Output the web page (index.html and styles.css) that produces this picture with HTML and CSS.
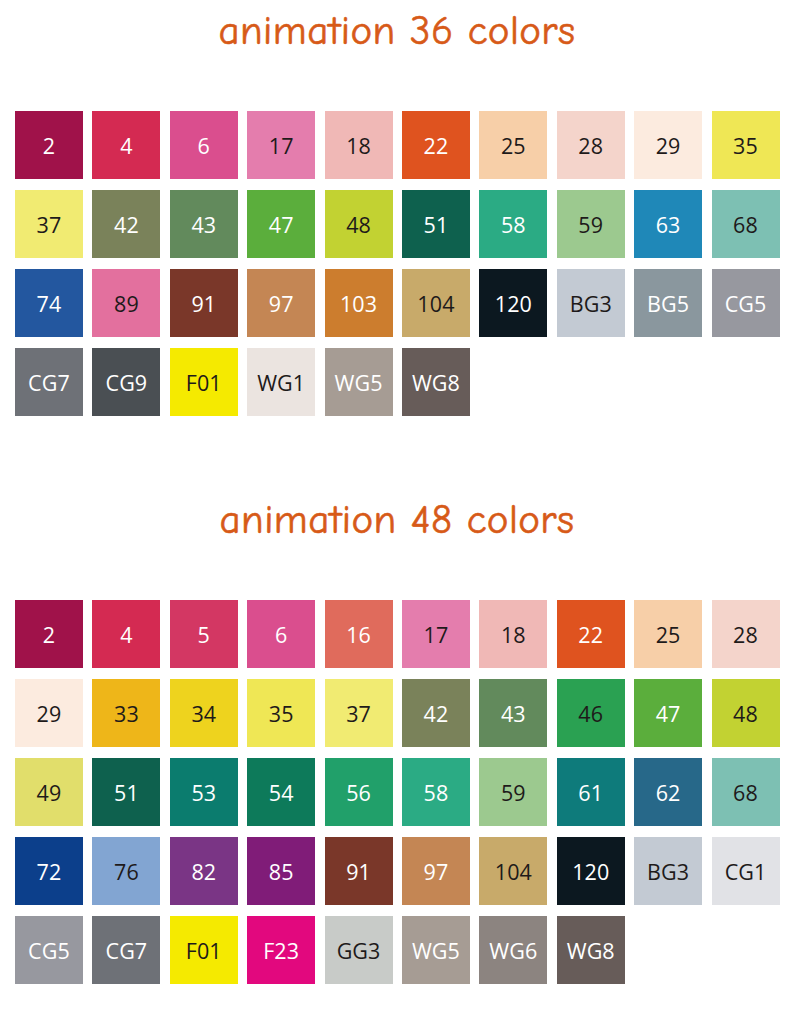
FILE: index.html
```html
<!DOCTYPE html>
<html>
<head>
<meta charset="utf-8">
<link rel="stylesheet" href="styles.css">
</head>
<body>
<section class="set set-36">
  <h1 class="title">animation 36 colors</h1>
  <div class="grid">
    <div class="sw" style="background:#A0124A">2</div>
    <div class="sw" style="background:#D42A52">4</div>
    <div class="sw" style="background:#DA4E8E">6</div>
    <div class="sw d" style="background:#E47DAD">17</div>
    <div class="sw d" style="background:#F0B8B6">18</div>
    <div class="sw" style="background:#DF531F">22</div>
    <div class="sw d" style="background:#F7CFA8">25</div>
    <div class="sw d" style="background:#F4D4CB">28</div>
    <div class="sw d" style="background:#FCEBDF">29</div>
    <div class="sw d" style="background:#EFE755">35</div>

    <div class="sw d" style="background:#F1EB72">37</div>
    <div class="sw" style="background:#7A825A">42</div>
    <div class="sw" style="background:#628A5C">43</div>
    <div class="sw" style="background:#5BAE3C">47</div>
    <div class="sw d" style="background:#C2D232">48</div>
    <div class="sw" style="background:#0E614E">51</div>
    <div class="sw" style="background:#2BAB84">58</div>
    <div class="sw d" style="background:#9CC98F">59</div>
    <div class="sw" style="background:#1F88B8">63</div>
    <div class="sw d" style="background:#7DC0B3">68</div>

    <div class="sw" style="background:#23579F">74</div>
    <div class="sw d" style="background:#E3709E">89</div>
    <div class="sw" style="background:#7A3729">91</div>
    <div class="sw" style="background:#C48654">97</div>
    <div class="sw" style="background:#CC7D2E">103</div>
    <div class="sw d" style="background:#C8AA6A">104</div>
    <div class="sw" style="background:#0C1820">120</div>
    <div class="sw d" style="background:#C3CAD3">BG3</div>
    <div class="sw" style="background:#8A979E">BG5</div>
    <div class="sw" style="background:#97989F">CG5</div>

    <div class="sw" style="background:#6E7177">CG7</div>
    <div class="sw" style="background:#4A4F53">CG9</div>
    <div class="sw d" style="background:#F5EA00">F01</div>
    <div class="sw d" style="background:#EBE4E0">WG1</div>
    <div class="sw" style="background:#A69C94">WG5</div>
    <div class="sw" style="background:#675C59">WG8</div>
  </div>
</section>

<section class="set set-48">
  <h1 class="title">animation 48 colors</h1>
  <div class="grid">
    <div class="sw" style="background:#A0124A">2</div>
    <div class="sw" style="background:#D42A52">4</div>
    <div class="sw" style="background:#D33763">5</div>
    <div class="sw" style="background:#DA4E8E">6</div>
    <div class="sw" style="background:#E06B5C">16</div>
    <div class="sw d" style="background:#E47DAD">17</div>
    <div class="sw d" style="background:#F0B8B6">18</div>
    <div class="sw" style="background:#DF531F">22</div>
    <div class="sw d" style="background:#F7CFA8">25</div>
    <div class="sw d" style="background:#F4D4CB">28</div>

    <div class="sw d" style="background:#FCEBDF">29</div>
    <div class="sw d" style="background:#EEB619">33</div>
    <div class="sw d" style="background:#EED31E">34</div>
    <div class="sw d" style="background:#EFE755">35</div>
    <div class="sw d" style="background:#F1EB72">37</div>
    <div class="sw" style="background:#7A825A">42</div>
    <div class="sw" style="background:#628A5C">43</div>
    <div class="sw d" style="background:#2AA152">46</div>
    <div class="sw" style="background:#5BAE3C">47</div>
    <div class="sw d" style="background:#C2D232">48</div>

    <div class="sw d" style="background:#E1DE6B">49</div>
    <div class="sw" style="background:#0E614E">51</div>
    <div class="sw" style="background:#0B7C6E">53</div>
    <div class="sw" style="background:#0D7A5A">54</div>
    <div class="sw" style="background:#21A06A">56</div>
    <div class="sw" style="background:#2BAB84">58</div>
    <div class="sw d" style="background:#9CC98F">59</div>
    <div class="sw" style="background:#0E7B7B">61</div>
    <div class="sw" style="background:#276889">62</div>
    <div class="sw d" style="background:#7DC0B3">68</div>

    <div class="sw" style="background:#0C3F8B">72</div>
    <div class="sw d" style="background:#82A5D2">76</div>
    <div class="sw" style="background:#7A3585">82</div>
    <div class="sw" style="background:#801C78">85</div>
    <div class="sw" style="background:#7A3729">91</div>
    <div class="sw" style="background:#C48654">97</div>
    <div class="sw d" style="background:#C8AA6A">104</div>
    <div class="sw" style="background:#0C1820">120</div>
    <div class="sw d" style="background:#C3CAD3">BG3</div>
    <div class="sw d" style="background:#E1E2E6">CG1</div>

    <div class="sw" style="background:#97989F">CG5</div>
    <div class="sw" style="background:#6E7177">CG7</div>
    <div class="sw d" style="background:#F5EA00">F01</div>
    <div class="sw" style="background:#E2087E">F23</div>
    <div class="sw d" style="background:#C8CBC8">GG3</div>
    <div class="sw" style="background:#A69C94">WG5</div>
    <div class="sw" style="background:#8C8480">WG6</div>
    <div class="sw" style="background:#675C59">WG8</div>
  </div>
</section>
</body>
</html>
```

FILE: styles.css
```css
html, body {
  margin: 0;
  padding: 0;
  background: #ffffff;
}

body {
  width: 790px;
  font-family: "Open Sans", "DejaVu Sans", sans-serif;
}

.set {
  display: flex;
  flex-direction: column;
  align-items: stretch;
}

.set-36 {
  padding-top: 6px;
}

.set-48 {
  padding-top: 79px;
}

.title {
  margin: 0;
  padding-left: 4px;
  text-align: center;
  font-family: "Comic Sans MS", "Comic Neue", "Open Sans", sans-serif;
  font-weight: 400;
  font-size: 41px;
  line-height: 50px;
  color: #D75A18;
  letter-spacing: 0.4px;
  -webkit-text-stroke: 0.6px #D75A18;
}

.grid {
  display: grid;
  grid-template-columns: repeat(10, 68px);
  column-gap: 9.4px;
  row-gap: 11px;
  margin-top: 55px;
  margin-left: 15px;
}

.sw {
  height: 68px;
  display: flex;
  align-items: center;
  justify-content: center;
  font-size: 21.5px;
  color: #ffffff;
  letter-spacing: 0.1px;
}

.sw.d {
  color: #1E1A1A;
}
```
